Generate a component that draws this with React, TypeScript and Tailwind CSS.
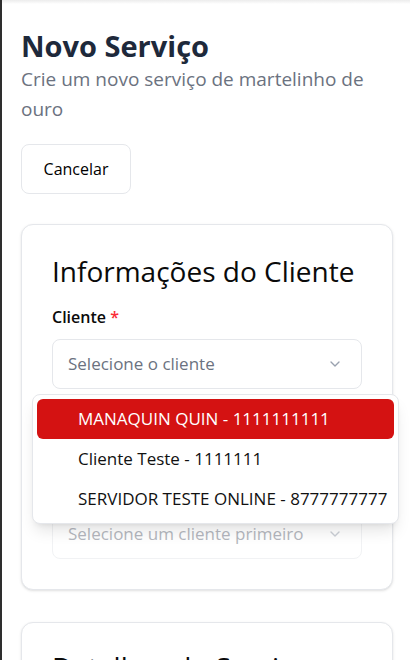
import { ChevronDown } from 'lucide-react';

const clientes = [
  { id: 1, label: 'MANAQUIN QUIN - 1111111111' },
  { id: 2, label: 'Cliente Teste - 1111111' },
  { id: 3, label: 'SERVIDOR TESTE ONLINE - 8777777777' },
];

function App() {
  const font = { fontFamily: '"Open Sans", "Noto Sans", sans-serif' };

  return (
    <div className="min-h-screen bg-white border-l-2 border-[#2e2e2e] overflow-hidden" style={font}>
      {/* Sombra do header acima */}
      <div className="h-[4px] bg-gradient-to-b from-[#ececec] to-white" />

      <div className="pl-[19px] pr-[17px] pt-[24px]">
        {/* Cabeçalho */}
        <h1 className="text-[29px] leading-[36px] font-bold text-[#1e293b]">Novo Serviço</h1>
        <p className="text-[19px] leading-[30px] text-[#6b7280]">Crie um novo serviço de martelinho de ouro</p>

        <button className="mt-[20px] h-[50px] w-[110px] rounded-lg border border-gray-200 bg-white text-[16px] font-medium text-black">
          Cancelar
        </button>

        {/* Card: Informações do Cliente */}
        <div className="mt-[30px] rounded-xl border border-gray-200 bg-white shadow-sm px-[30px] pt-[28px] pb-[30px]">
          <h2 className="text-[28px] leading-[36px] font-medium text-[#0a0a0a]">Informações do Cliente</h2>

          <div className="mt-[16px]">
            <label className="block text-[16px] leading-[24px] font-semibold text-[#0a0a0a]">
              Cliente <span className="text-red-500">*</span>
            </label>
            <div className="relative mt-[10px]">
              <button className="flex h-[50px] w-full items-center justify-between rounded-lg border border-gray-200 bg-white pl-[15px] pr-[18px] text-[17px] text-[#6b7280]">
                <span>Selecione o cliente</span>
                <ChevronDown className="h-4 w-4 text-gray-400" />
              </button>

              {/* Lista aberta */}
              <div className="absolute left-[-20px] top-[calc(100%+5px)] z-10 w-[367px] rounded-lg border border-gray-200 bg-white p-[4px] shadow-lg">
                {clientes.map((c, i) => (
                  <div
                    key={c.id}
                    className={`flex h-[40px] items-center rounded-md pl-[41px] text-[17px] ${
                      i === 0 ? 'bg-[#d41212] text-white' : 'text-[#111]'
                    }`}
                  >
                    {c.label}
                  </div>
                ))}
              </div>
            </div>
          </div>

          {/* Veículo (coberto pela lista) */}
          <div className="mt-[120px] opacity-50">
            <button className="flex h-[50px] w-full items-center justify-between rounded-lg border border-gray-200 bg-white pl-[15px] pr-[18px] text-[17px] text-[#6b7280]">
              <span>Selecione um cliente primeiro</span>
              <ChevronDown className="h-4 w-4 text-gray-400" />
            </button>
          </div>
        </div>

        {/* Card: Detalhes do Serviço */}
        <div className="mt-[32px] rounded-xl border border-gray-200 bg-white shadow-sm px-[30px] pt-[26px] pb-[30px]">
          <h2 className="text-[28px] leading-[36px] font-medium text-[#0a0a0a]">Detalhes do Serviço</h2>
          <div className="h-[200px]" />
        </div>
      </div>
    </div>
  );
}

export default App;
